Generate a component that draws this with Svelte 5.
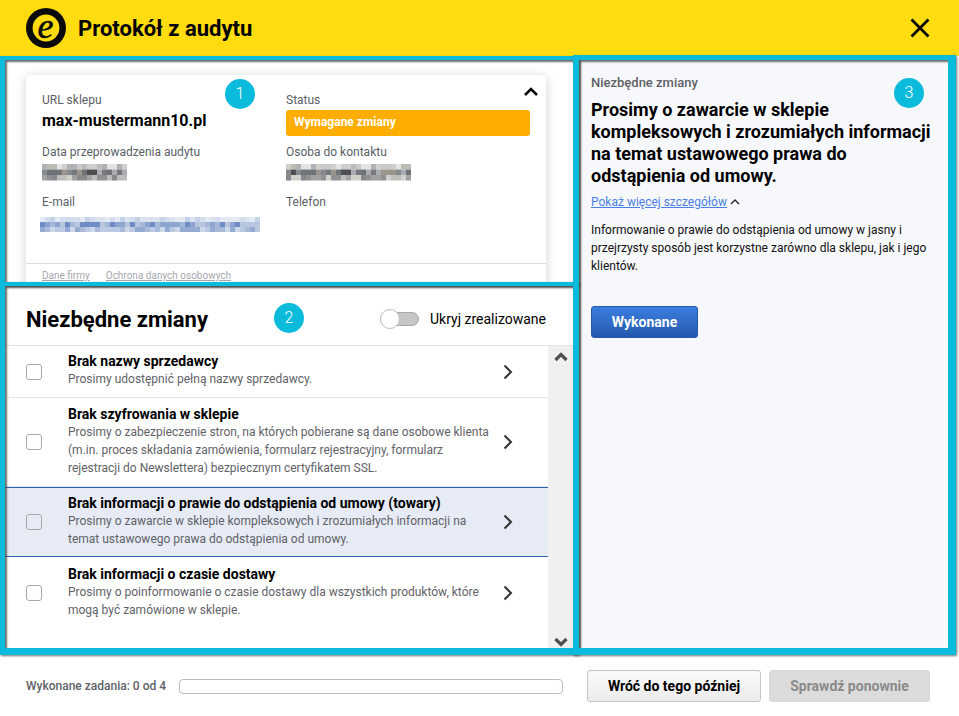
<script>
  const items = [
    { title: 'Brak nazwy sprzedawcy', text: ['Prosimy udostępnić pełną nazwy sprzedawcy.'], h: 52, lift: 4 },
    { title: 'Brak szyfrowania w sklepie', text: ['Prosimy o zabezpieczenie stron, na których pobierane są dane osobowe klienta', '(m.in. proces składania zamówienia, formularz rejestracyjny, formularz', 'rejestracji do Newslettera) bezpiecznym certyfikatem SSL.'], h: 89, lift: 2 },
    { title: 'Brak informacji o prawie do odstąpienia od umowy (towary)', text: ['Prosimy o zawarcie w sklepie kompleksowych i zrozumiałych informacji na', 'temat ustawowego prawa do odstąpienia od umowy.'], h: 70, lift: 2, active: true },
    { title: 'Brak informacji o czasie dostawy', text: ['Prosimy o poinformowanie o czasie dostawy dla wszystkich produktów, które', 'mogą być zamówione w sklepie.'], h: 72, lift: 2 }
  ];

  function mosaic(w, h, rows, seed) {
    const cells = [];
    let s = seed;
    rows.forEach((palette, y) => {
      for (let x = 0; x < w; x++) {
        s = (s * 9301 + 49297) % 233280;
        cells.push({ x: x * 5, y: y * h, c: palette[(s >> 4) % palette.length] });
      }
    });
    return cells;
  }
  const grey = [
    ['#d0cfcc', '#bdbbb6', '#e4e4e4', '#aeb2b6', '#c8cacc'],
    ['#6f7276', '#9a968e', '#85888c', '#a9adb2', '#4c4e52', '#77797c'],
    ['#a0a2a4', '#8f9194', '#bcbcb8', '#d2d0ca', '#86888b']
  ];
  const blue = [
    ['#d3ddee', '#c4d2e8', '#e4eaf4', '#dbe3f0'],
    ['#8ea5d0', '#6f8cc4', '#a6b8da', '#b8c6e0'],
    ['#a9bad9', '#95abd3', '#bcc9e2', '#cdd7ea']
  ];
  const m1 = mosaic(17, 5.5, grey, 17);
  const m2 = mosaic(25, 5.5, grey, 91);
  const m3 = mosaic(44, 5, blue, 53);
</script>

<div class="page">
  <header class="top">
    <svg class="logo" viewBox="0 0 40 40" width="40" height="40" overflow="visible" aria-hidden="true">
      <circle cx="20" cy="20" r="20" fill="#0a0a0a" />
      <circle cx="20" cy="20" r="13.4" fill="#ffdc0f" />
      <text x="19.5" y="29.5" text-anchor="middle" class="logo-e">e</text>
    </svg>
    <h1>Protokół z audytu</h1>
    <svg class="close" viewBox="0 0 20 20" width="20" height="20" aria-hidden="true">
      <path d="M1.5 1.5l17 17M18.5 1.5l-17 17" stroke="#0a0a0a" stroke-width="2.8" fill="none" />
    </svg>
  </header>

  <main class="body">
    <section class="left">
      <div class="audit">
        <div class="card">
          <svg class="collapse" viewBox="0 0 14 9" width="14" height="9" aria-hidden="true">
            <path d="M1 8l6-6 6 6" fill="none" stroke="#0a0a0a" stroke-width="2.6" />
          </svg>
          <div class="fields">
            <div class="field one">
              <div class="label">URL sklepu</div>
              <div class="value">max-mustermann10.pl</div>
            </div>
            <div class="field one">
              <div class="label">Status</div>
              <div class="status">Wymagane zmiany</div>
            </div>
            <div class="field two">
              <div class="label">Data przeprowadzenia audytu</div>
              <svg class="blur" width="85" height="17" aria-hidden="true">
                {#each m1 as r}<rect x={r.x} y={r.y} width="5" height="5.5" fill={r.c} />{/each}
              </svg>
            </div>
            <div class="field two">
              <div class="label">Osoba do kontaktu</div>
              <svg class="blur" width="125" height="17" aria-hidden="true">
                {#each m2 as r}<rect x={r.x} y={r.y} width="5" height="5.5" fill={r.c} />{/each}
              </svg>
            </div>
            <div class="field three">
              <div class="label">E-mail</div>
              <svg class="blur mail" width="220" height="15" aria-hidden="true">
                {#each m3 as r}<rect x={r.x} y={r.y} width="5" height="5" fill={r.c} />{/each}
              </svg>
            </div>
            <div class="field three">
              <div class="label">Telefon</div>
            </div>
          </div>
          <div class="links">
            <span>Dane firmy</span>
            <span>Ochrona danych osobowych</span>
          </div>
        </div>
      </div>

      <div class="changes">
        <div class="changes-head">
          <h2>Niezbędne zmiany</h2>
          <div class="toggle-wrap">
            <span class="toggle"><span class="knob"></span></span>
            <span class="toggle-label">Ukryj zrealizowane</span>
          </div>
        </div>
        <div class="list-wrap">
          <div class="list">
            {#each items as item}
              <div class="row" class:active={item.active} style="height:{item.h}px">
                <span class="check"></span>
                <div class="row-text" style="padding-bottom:{item.lift}px">
                  <div class="row-title">{item.title}</div>
                  <div class="row-desc">
                    {#each item.text as line}<div>{line}</div>{/each}
                  </div>
                </div>
                <svg class="chev" viewBox="0 0 10 16" width="10" height="16" aria-hidden="true">
                  <path d="M1.5 1.5L8 8l-6.5 6.5" fill="none" stroke="#333" stroke-width="2" />
                </svg>
              </div>
            {/each}
          </div>
          <div class="scrollbar">
            <svg viewBox="0 0 14 10" width="14" height="10" aria-hidden="true"><path d="M1.5 8L7 2.5 12.5 8" fill="none" stroke="#505050" stroke-width="3.2" /></svg>
            <svg viewBox="0 0 14 10" width="14" height="10" aria-hidden="true"><path d="M1.5 2L7 7.5 12.5 2" fill="none" stroke="#505050" stroke-width="3.2" /></svg>
          </div>
        </div>
      </div>
    </section>

    <aside class="right">
      <div class="eyebrow">Niezbędne zmiany</div>
      <h3>Prosimy o zawarcie w sklepie kompleksowych i zrozumiałych informacji na temat ustawowego prawa do odstąpienia od umowy.</h3>
      <div class="more">
        <span class="more-link">Pokaż więcej szczegółów</span>
        <svg viewBox="0 0 10 6" width="10" height="6" aria-hidden="true"><path d="M1 5l4-4 4 4" fill="none" stroke="#222" stroke-width="1.3" /></svg>
      </div>
      <p>Informowanie o prawie do odstąpienia od umowy w jasny i przejrzysty sposób jest korzystne zarówno dla sklepu, jak i jego klientów.</p>
      <button class="done">Wykonane</button>
    </aside>
  </main>

  <footer class="bottom">
    <span class="progress-label">Wykonane zadania: 0 od 4</span>
    <span class="progress"></span>
    <button class="later">Wróć do tego później</button>
    <button class="recheck">Sprawdź ponownie</button>
  </footer>

  <div class="frame f1"></div>
  <div class="frame f2"></div>
  <div class="frame f3"></div>
  <span class="badge b1">1</span>
  <span class="badge b2">2</span>
  <span class="badge b3">3</span>
</div>

<style>
  :global(body) {
    margin: 0;
    background: #fff;
  }
  .page {
    position: relative;
    width: 959px;
    height: 716px;
    overflow: hidden;
    font-family: Roboto, "Liberation Sans", sans-serif;
    color: #000;
    background: #fff;
    display: flex;
    flex-direction: column;
  }
  .top {
    height: 56px;
    flex: none;
    background: #ffdc0f;
    display: flex;
    align-items: center;
    padding: 0 29px 0 26px;
    box-sizing: border-box;
  }
  .logo {
    flex: none;
  }
  .logo-e {
    font-family: "Liberation Serif", serif;
    font-style: italic;
    font-weight: 400;
    font-size: 36px;
    fill: #0a0a0a;
    stroke: #0a0a0a;
    stroke-width: 0.5px;
  }
  h1 {
    margin: 0 0 0 12px;
    font-size: 22px;
    font-weight: 700;
    flex: 1;
  }
  .body {
    height: 597px;
    flex: none;
    display: flex;
  }
  .left {
    width: 575px;
    flex: none;
    display: flex;
    flex-direction: column;
  }
  .audit {
    height: 228px;
    flex: none;
    padding: 19px 29px 0 26px;
    box-sizing: border-box;
    overflow: hidden;
  }
  .card {
    position: relative;
    height: 240px;
    background: #fff;
    border-radius: 5px;
    box-shadow: 0 2px 12px rgba(0, 0, 0, 0.18);
  }
  .collapse {
    position: absolute;
    top: 12px;
    right: 8px;
  }
  .fields {
    display: grid;
    grid-template-columns: 244px 244px;
    grid-template-rows: 52px 50px 1fr;
    padding: 18px 0 0 16px;
    height: 170px;
    box-sizing: border-box;
  }
  .label {
    font-size: 12px;
    line-height: 14px;
    color: #5a5f66;
  }
  .value {
    margin-top: 4px;
    font-size: 16px;
    line-height: 20px;
    font-weight: 700;
  }
  .status {
    margin-top: 3px;
    height: 26px;
    line-height: 25px;
    width: 244px;
    background: #ffad00;
    color: #fff;
    border-radius: 3px;
    padding-left: 8px;
    box-sizing: border-box;
    font-size: 12px;
    font-weight: 700;
  }
  .blur {
    display: block;
    margin-top: 5px;
  }
  .blur.mail {
    margin: 8px 0 0 -2px;
  }
  .links {
    border-top: 1px solid #dcdcdc;
    margin-top: 18px;
    padding: 6px 0 0 16px;
    display: flex;
    gap: 16px;
    font-size: 10px;
    color: #a5a8ad;
  }
  .links span {
    text-decoration: underline;
  }
  .changes {
    flex: 1;
    display: flex;
    flex-direction: column;
    min-height: 0;
  }
  .changes-head {
    height: 62px;
    flex: none;
    display: flex;
    align-items: center;
    justify-content: space-between;
    padding: 9px 29px 0 26px;
    box-sizing: border-box;
    border-bottom: 1px solid #e4e4e4;
  }
  h2 {
    margin: 0;
    font-size: 22px;
    font-weight: 700;
  }
  .toggle-wrap {
    display: flex;
    align-items: center;
    gap: 11px;
  }
  .toggle {
    position: relative;
    width: 39px;
    height: 14px;
    background: #c6c6c6;
    border: 1px solid #a8a8a8;
    border-radius: 7px;
    box-sizing: border-box;
  }
  .knob {
    position: absolute;
    left: -1px;
    top: -4px;
    width: 20px;
    height: 20px;
    box-sizing: border-box;
    border-radius: 50%;
    background: #fff;
    border: 1px solid #bbb;
  }
  .toggle-label {
    font-size: 14px;
  }
  .list-wrap {
    flex: 1;
    display: flex;
    min-height: 0;
  }
  .list {
    flex: 1;
    min-width: 0;
  }
  .row {
    display: flex;
    align-items: center;
    padding: 0 35px 0 26px;
    box-sizing: border-box;
    border-bottom: 1px solid #e4e4e4;
  }
  .row:last-child {
    border-bottom: 0;
  }
  .row.active {
    background: #e6ebf5;
    border-top: 1px solid #2c62b4;
    border-bottom: 1px solid #2c62b4;
  }
  .check {
    width: 16px;
    height: 16px;
    flex: none;
    box-sizing: border-box;
    border: 1px solid #a9a9a9;
    border-radius: 3px;
    background: #fff;
  }
  .row.active .check {
    background: transparent;
  }
  .row-text {
    flex: 1;
    margin-left: 26px;
    min-width: 0;
  }
  .row-title {
    font-size: 14px;
    line-height: 18px;
    font-weight: 700;
  }
  .row-desc {
    font-size: 12px;
    line-height: 18px;
    color: #5f6268;
    white-space: nowrap;
  }
  .scrollbar {
    width: 27px;
    flex: none;
    background: #f0f0f0;
    display: flex;
    flex-direction: column;
    align-items: center;
    justify-content: space-between;
    padding: 6px 2px 6px 0;
    box-sizing: border-box;
  }
  .right {
    flex: 1;
    background: #f7f8fb;
    padding: 19px 16px 0 16px;
    box-sizing: border-box;
  }
  .eyebrow {
    font-size: 13px;
    line-height: 16px;
    font-weight: 500;
    color: #5f6268;
  }
  h3 {
    margin: 8px 0 0;
    font-size: 18px;
    line-height: 22px;
    font-weight: 700;
  }
  .more {
    margin-top: 6px;
    display: flex;
    align-items: center;
    gap: 3px;
    font-size: 12px;
    line-height: 18px;
  }
  .more-link {
    color: #4a80e6;
    text-decoration: underline;
  }
  p {
    margin: 10px 0 0;
    font-size: 12px;
    line-height: 18px;
    color: #111;
  }
  button {
    font-family: inherit;
    font-weight: 700;
    font-size: 14px;
    box-sizing: border-box;
    border-radius: 3px;
    padding: 0 0 1px;
  }
  .done {
    display: block;
    margin-top: 31px;
    width: 107px;
    height: 32px;
    color: #fff;
    background: linear-gradient(#3a7ee0, #2559ad);
    border: 1px solid #2559ad;
  }
  .bottom {
    flex: 1;
    display: flex;
    align-items: center;
    padding: 3px 29px 0 26px;
  }
  .progress-label {
    font-size: 12px;
    font-weight: 500;
    color: #5f6268;
    white-space: nowrap;
  }
  .progress {
    margin-left: 13px;
    width: 384px;
    height: 15px;
    flex: none;
    box-sizing: border-box;
    border: 1px solid #bdbdbd;
    border-radius: 4px;
    background: #fff;
  }
  .later {
    margin-left: 24px;
    width: 174px;
    height: 32px;
    color: #000;
    background: linear-gradient(#fafafa, #ececec);
    border: 1px solid #c4c4c4;
  }
  .recheck {
    margin-left: 8px;
    width: 161px;
    height: 32px;
    color: #8a8a8a;
    background: #dcdcdc;
    border: 1px solid #d8d8d8;
  }
  .frame {
    position: absolute;
    box-sizing: border-box;
    border-style: solid;
    border-color: #0abbdc;
    box-shadow: inset 2px 2px 2px rgba(60, 60, 60, 0.75), 1px 1px 2px rgba(60, 60, 60, 0.7);
    pointer-events: none;
  }
  .f1 {
    left: 0;
    top: 56px;
    width: 579px;
    height: 230px;
    border-width: 4px 6px 4px 5px;
  }
  .f2 {
    left: 0;
    top: 282px;
    width: 579px;
    height: 373px;
    border-width: 4px 6px 7px 5px;
  }
  .f3 {
    left: 573px;
    top: 55px;
    width: 383px;
    height: 600px;
    border-width: 5px 8px 7px 6px;
  }
  .badge {
    position: absolute;
    width: 30px;
    height: 30px;
    border-radius: 50%;
    background: #0abbdc;
    color: #fff;
    font-size: 16px;
    font-weight: 300;
    line-height: 30px;
    text-align: center;
  }
  .b1 {
    left: 225px;
    top: 79px;
  }
  .b2 {
    left: 274px;
    top: 303px;
  }
  .b3 {
    left: 894px;
    top: 78px;
  }
</style>
